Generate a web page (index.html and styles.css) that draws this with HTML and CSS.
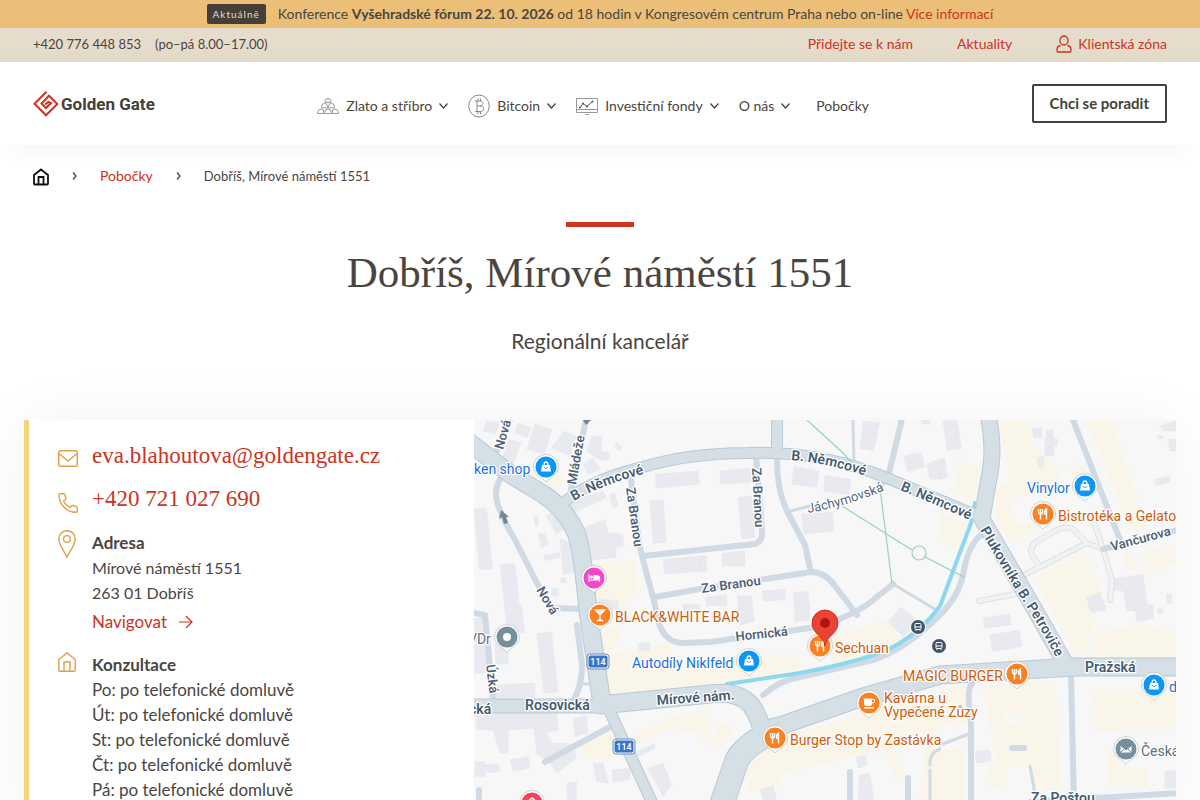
FILE: index.html
```html
<!DOCTYPE html>
<html lang="cs">
<head>
<meta charset="utf-8">
<meta name="viewport" content="width=device-width, initial-scale=1">
<title>Dobříš, Mírové náměstí 1551 | Golden Gate</title>
<link rel="stylesheet" href="styles.css">
</head>
<body>
<div class="notice">
  <span class="notice-tag">Aktuálně</span>
  <p class="notice-text">Konference <strong>Vyšehradské fórum 22. 10. 2026</strong> od 18 hodin v Kongresovém centrum Praha nebo on-line <a href="#">Více informací</a></p>
</div>
<div class="topbar">
  <p class="topbar-phone"><span>+420 776 448 853</span><span>(po–pá 8.00–17.00)</span></p>
  <nav class="topbar-links" aria-label="Rychlé odkazy">
    <a href="#">Přidejte se k nám</a>
    <a href="#">Aktuality</a>
    <a class="client" href="#"><svg width="16" height="18" viewBox="0 0 16 18" fill="none" stroke="currentColor" stroke-width="1.3"><rect x="4" y="1" width="8" height="9" rx="4"/><path d="M4.500 10.500C2 11 1 12.500 1 14.500V16Q1 17 2 17H14Q15 17 15 16V14.500C15 12.500 14 11 11.500 10.500"/></svg>Klientská zóna</a>
  </nav>
</div>
<header class="header">
  <a class="logo" href="#"><svg width="26" height="26" viewBox="0 0 26 26" fill="none" stroke="#cd3322" stroke-width="2"><path d="M13.500 .8L1.500 12.800L13 24.300L24.300 13L16 4.700L8.500 12.500L13 17L18 12L15.500 11L12 13.500"/></svg><span>Golden Gate</span></a>
  <nav class="nav" aria-label="Hlavní navigace">
    <a href="#"><svg width="22" height="18" viewBox="0 0 22 18" fill="none" stroke="#999" stroke-width="1"><path d="M8 5.500L8.500 2.500Q11 0 13.500 2.500L14 5.500ZM4.500 11L5 7.500Q7.500 5 10 7.500L10.500 11ZM11.500 11L12 7.500Q14.500 5 17 7.500L17.500 11ZM.5 16.500L1.500 13Q4 11 6.500 13L7 16.500ZM7.500 16.500L8.500 13Q11 11 13.500 13L14.500 16.500ZM15 16.500L15.500 13Q18 11 20.500 13L21.500 16.500Z"/></svg><span>Zlato a stříbro</span><svg class="chevron" width="9" height="6" viewBox="0 0 9 6"><path d="M.5 .5L4.500 5L8.500 .5"/></svg></a>
    <a href="#"><svg width="22" height="24" viewBox="0 0 22 24" fill="none" stroke="#8b8985" stroke-width="1"><ellipse cx="11" cy="12" rx="10.300" ry="11"/><path d="M7 7H12C16 7 16 12 12 12H9M12 12C17 12 17 17.500 12 17.500H7M9 7V17.500M10 4.500V7M12.500 4.500V7M10 17.500V20M12.500 17.500V20"/></svg><span>Bitcoin</span><svg class="chevron" width="9" height="6" viewBox="0 0 9 6"><path d="M.5 .5L4.500 5L8.500 .5"/></svg></a>
    <a href="#"><svg width="22" height="18" viewBox="0 0 22 18" fill="none" stroke="#999" stroke-width="1"><path d="M.5 1.500H21.500V15.500H.5ZM.5 12.500H21.500M9 17.500H13"/><path stroke="#555" d="M4 10.500L7 6.500L11 9.500L16.500 4.500"/><g fill="#555" stroke="none"><circle cx="4" cy="10.500" r="1"/><circle cx="7" cy="6.500" r="1"/><circle cx="11" cy="9.500" r="1"/><circle cx="16.500" cy="4.500" r="1"/></g></svg><span>Investiční fondy</span><svg class="chevron" width="9" height="6" viewBox="0 0 9 6"><path d="M.5 .5L4.500 5L8.500 .5"/></svg></a>
    <a href="#"><span>O nás</span><svg class="chevron" width="9" height="6" viewBox="0 0 9 6"><path d="M.5 .5L4.500 5L8.500 .5"/></svg></a>
    <a class="nav-last" href="#">Pobočky</a>
  </nav>
  <button class="cta" type="button">Chci se poradit</button>
</header>
<main>
  <nav class="crumbs" aria-label="Drobečková navigace">
    <a class="crumb-home" href="#" aria-label="Domů"><svg width="16" height="20" viewBox="0 0 16 20" fill="none" stroke="#111" stroke-width="1.800"><path d="M1 9L8 3.500L15 9V17.500Q15 18.500 14 18.500H2Q1 18.500 1 17.500ZM5.500 18.500V11H10.500V18.500"/></svg></a>
    <svg class="crumb-sep" width="5" height="8" viewBox="0 0 5 8"><path d="M1 .5L4 4L1 7.500"/></svg>
    <a href="#">Pobočky</a>
    <svg class="crumb-sep" width="5" height="8" viewBox="0 0 5 8"><path d="M1 .5L4 4L1 7.500"/></svg>
    <span>Dobříš, Mírové náměstí 1551</span>
  </nav>
  <div class="hero">
    <h1>Dobříš, Mírové náměstí 1551</h1>
    <p>Regionální kancelář</p>
  </div>
  <section class="card">
    <div class="contact">
      <a class="row row-big" href="#"><svg class="ico" width="20" height="17" viewBox="0 0 20 17"><rect x=".7" y=".7" width="18.600" height="15.600" rx="1.500"/><path d="M1 3.500L10 11L19 3.500"/></svg><span>eva.blahoutova@goldengate.cz</span></a>
      <a class="row row-big" href="#"><svg class="ico" width="20" height="20" viewBox="0 0 20 20"><path d="M1 1.500Q1 .7 2 .7H5.500Q6.700 .7 7 2L7.800 5Q8 6 7 6.800L5.500 7.800Q7.500 12.500 12.500 14.500L13.500 13Q14 12.200 15 12.500L18 13.300Q19.300 13.700 19.300 15V18Q19.300 19.300 18 19.300C8.500 19.300 .7 11 1 1.500Z"/></svg><span>+420 721 027 690</span></a>
      <div class="row address"><svg class="ico" width="18" height="28" viewBox="0 0 18 28"><path d="M9 27C6 21 .8 15 .8 9C.8 4 4.500 .8 9 .8S17.200 4 17.200 9C17.200 15 12 21 9 27Z"/><circle cx="9" cy="9" r="3.400"/></svg>
        <div><h2>Adresa</h2><p>Mírové náměstí 1551<br>263 01 Dobříš</p><a class="navigate" href="#">Navigovat<svg width="14" height="14" viewBox="0 0 14 14" fill="none" stroke="currentColor" stroke-width="1.200"><path d="M0 7H13M7 1L13 7L7 13"/></svg></a></div></div>
      <div class="row hours"><svg class="ico" width="18" height="20" viewBox="0 0 18 20"><path d="M.8 7.500L9 .9L17.200 7.500V18Q17.200 19.300 16 19.300H2Q.8 19.300 .8 18ZM6 19V10H12V19"/></svg>
        <div><h2>Konzultace</h2><p>Po: po telefonické domluvě<br>Út: po telefonické domluvě<br>St: po telefonické domluvě<br>Čt: po telefonické domluvě<br>Pá: po telefonické domluvě</p></div></div>
    </div>
    <svg class="map" viewBox="474 420 702 420" role="img" aria-label="Mapa okolí pobočky">
      <defs>
        <g id="m-shop"><path class="pin" d="M0 15C-3 11-12.500 8-12.500 0A12.500 12.500 0 0 1 12.500 0C12.500 8 3 11 0 15Z"/><circle r="10.500" fill="#0b96f8"/><path d="M-4-2H4L5 4.500H-5Z" fill="#fff"/><path d="M-2-2C-2-6 2-6 2-2" fill="none" stroke="#fff" stroke-width="1.300"/><path d="M-1.800 0C-1 2 1 2 1.800 0" fill="none" stroke="#0b96f8"/></g>
        <g id="m-food"><path class="pin" d="M0 15C-3 11-12.500 8-12.500 0A12.500 12.500 0 0 1 12.500 0C12.500 8 3 11 0 15Z"/><circle r="10.500" fill="#fb8122"/><path d="M-4.500-5V-2Q-4.500 0-2.500 0T-.5-2V-5M-2.500-5V5.500M3.500 5.500V-5Q1.500-4 1.500 0H3.500" fill="none" stroke="#fff" stroke-width="1.400"/></g>
        <g id="m-grey"><path class="pin" d="M0 15C-3 11-12.500 8-12.500 0A12.500 12.500 0 0 1 12.500 0C12.500 8 3 11 0 15Z"/><circle r="10.500" fill="#758f9b"/></g>
        <g id="m-bus"><circle r="8" fill="#f7f7f7"/><circle r="7" fill="#405469"/><rect x="-3" y="-3.500" width="6" height="6" rx="1" fill="none" stroke="#fff"/><path d="M-3 0H3M-2 4V3M2 4V3" stroke="#fff"/></g>
        <g id="m-114"><rect x="-10" y="-7" width="20" height="13" rx="2.500" fill="#3d75c6" stroke="#fff"/><rect x="-11" y="-8" width="22" height="15" rx="3" fill="none" stroke="#6e8ec0"/></g>
      </defs>
      <rect x="474" y="420" width="702" height="420" fill="#f7f7f7"/>
      <g class="land">
        <path d="M593 564L634 560L638 594L612 612L595 606ZM533 475L550 470L564 480L556 490Z"/>
        <path transform="translate(940 416) scale(.333)" d="M175 12H268L275 80L340 145L365 190L310 230L240 240L210 260L230 325L310 320L215 390L165 300L170 215L215 200ZM440 12H515L620 330L585 350L540 270L500 160ZM60 140L125 150L95 260L45 220ZM0 290L80 320L55 405L0 370ZM385 155L430 140L445 170L415 190ZM290 480L435 405L500 560L480 585H335ZM540 375L600 460L560 465ZM610 410L700 385L710 440L620 475Z"/>
        <path transform="translate(470 605) scale(.333)" d="M380 90L450 60V110L410 150L600 110L620 200L720 190V245L420 275ZM325 420L430 370L470 400L590 340L720 310V390L690 420L680 380L590 375L410 465H350Z"/>
        <path transform="translate(700 605) scale(.333)" d="M0 170L300 145V205L0 240ZM380 100L440 80L570 40L600 110L480 165L400 180ZM135 460L210 405L480 330L720 270V370L580 420L625 520L590 535L555 435L250 505L230 545L150 560ZM45 380L70 350L105 375L70 415L25 430ZM95 560H130L125 585H90ZM680 380H720V585H660Z"/>
        <path transform="translate(940 605) scale(.333)" d="M330 0H440L465 50L440 135L405 155ZM465 85L610 55L720 90V160H465ZM130 245L345 225L365 560L290 555L270 480L200 490V540L155 550L140 475H170ZM460 255H720V370L465 380ZM505 440H540V490H625V545H505ZM0 250L85 245V365L0 360ZM0 440L70 430V585H0Z"/>
      </g>
      <g class="houses">
        <path transform="translate(470 416) scale(.333)" d="M50 15L90 20L75 55L40 45ZM115 70L155 80L125 155L95 130ZM145 20L185 35L170 65L135 50ZM195 25L245 40L225 115L170 100ZM280 45L320 60L300 120L245 95ZM365 60L395 60V105L420 110L415 135L385 130L350 105ZM340 145L370 125L390 160L355 175ZM440 80L455 90L450 103L435 97ZM555 175L685 165L690 205L560 217ZM300 255L400 225L410 245L305 293ZM418 235L435 230L445 270L428 275ZM540 255L580 252L590 380L550 383ZM340 335L405 312L415 350L458 355L463 390L438 393V425L350 435ZM228 300L258 285L285 335L260 355ZM192 300L205 303V333L195 328ZM203 350L225 355L235 385L215 395ZM270 370L312 380V470L280 475ZM12 280L50 278L68 460H28ZM90 445L135 442L150 585H105ZM220 420L270 410V425L225 435ZM580 430L705 420L712 465L585 475ZM248 515L265 518L268 540H245ZM272 488L288 486V500H272ZM640 565H690V585H640ZM385 550L445 555V580H380Z"/>
        <path transform="translate(700 416) scale(.333)" d="M490 15L540 20L522 105L480 97ZM612 120L665 110L675 155L622 167ZM680 145L720 130V190H690ZM282 150L358 165L350 215L275 205ZM375 178L455 190L447 237L372 225ZM305 295L398 288L402 345L312 355ZM60 165L155 155V200L60 205ZM115 245L155 240L165 365L125 368ZM67 412L135 405V450H67ZM0 420H20V465H0ZM15 545L80 535V570H20ZM112 540H155L160 585H115ZM187 525L255 520V552L190 557ZM280 530L325 527L330 585H285ZM665 12H690V23H665Z"/>
        <path transform="translate(940 416) scale(.333)" d="M8 15L50 12L65 97L22 103ZM278 37H305V65H280ZM320 42H340V65L352 68V90H342V120H315V65H320ZM292 125L310 123V155H294ZM0 130L15 128L22 185L0 190ZM510 490L610 475L625 585H560L550 525H510ZM440 545L480 530L500 585H450ZM660 30L710 12V45H670ZM655 58H670V68H655ZM685 70H710V105H690ZM645 190L690 180L692 198L648 208ZM680 535L695 533V563H683Z"/>
        <path transform="translate(470 605) scale(.333)" d="M12 40H55V205H12ZM105 0H155L165 85L110 75ZM75 110L115 125V178H78ZM200 85L245 80L265 262L222 265ZM70 240L195 235V280H70ZM18 320H260L265 375L230 385L245 415H285L310 420L320 460L260 505L240 475L200 445L192 370L115 375V445H90L70 375H20ZM310 340L350 332L355 385L315 395ZM120 465L175 455L180 490L130 500ZM45 480L85 475L90 500L50 505ZM15 470H45V515H12ZM370 475H400L415 535L380 530ZM425 495L480 490V525L430 533ZM500 440L555 415V430L500 460ZM535 490L580 475L605 540L580 575ZM505 115L540 112L542 138L508 137ZM290 535L320 530V585H292Z"/>
        <path transform="translate(700 605) scale(.333)" d="M565 50L605 5L655 50L610 95ZM470 455L498 450L503 480L475 490ZM478 510L510 505L522 585H475ZM180 555L220 545L230 585H190ZM115 0H155L165 50L120 60ZM285 0H330V45L285 50Z"/>
        <path transform="translate(940 605) scale(.333)" d="M130 38L210 27L213 60L135 70ZM150 90L240 75L245 125L157 140ZM105 440L150 435L155 468L110 475ZM585 0H640V40L590 50ZM652 12L667 8L670 25L655 28ZM450 0H495V10L460 25ZM675 500L720 495V550H675Z"/>
        <path class="yard" d="M1004 714L1024 712V722L1004 724Z"/>
      </g>
      <g class="lanes-edge"><path d="M1022 576L1087 543L1073 529Q1067 525 1055 531L1036 542Q1028 548 1033 557L1038 564M1087 543L1103 549L1094 523M1103 549L1112 580L1110 600M1015 594L979 601"/></g>
      <g class="lanes"><path d="M1022 576L1087 543L1073 529Q1067 525 1055 531L1036 542Q1028 548 1033 557L1038 564M1087 543L1103 549L1094 523M1103 549L1112 580L1110 600M1015 594L979 601"/></g>
      <g class="minor">
        <path d="M500 479Q493 492 498 505Q504 522 513 536L537 583L552 608L585 609M495 455L512 415M569 499L587 415M630 472L640 548L655 605Q659 643 683 643L710 642L810 628Q840 622 867 605L893 584M643 556L755 544Q763 541 762 530L756 455M777 453Q776 490 788 513L805 545L811 572M655 597L700 589L811 572Q825 572 835 586L857 615M903 415L888 477M577 625L582 665Q582 685 575 697M545 762L610 727M474 613L485 615L493 700M1073 420L1122 545M1103 549L1178 530M983 533Q968 545 964 570T940 615Q905 650 873 660L800 677Q780 680 763 695M1071 675L1075 850M972 684Q966 690 971 722V850M1030 802L1180 793M850 772V850M908 778V850"/>
        <path class="thin" d="M853 420L854 463M787 512L810 506M873 490L888 481M893 584L938 611M581 684H593M940 745L969 734M1030 766L1036 800M940 749Q929 753 930 765M930 770V850"/>
        <path d="M1012 748H1024M479 790V850"/>
      </g>
      <g class="river"><path d="M975 503L971 523L940 606Q925 627 900 643T800 673L727 684"/></g>
      <g class="major-edge">
        <path stroke-width="19" d="M470 443L510 474L543 494Q567 510 577 535Q583 555 588 611L602 704M600 705L710 694Q738 690 751 705Q760 718 763 735M1180 667L1073 667L940 675L860 698L777 727"/>
        <path stroke-width="25" d="M775 730Q745 745 737 760L718 815"/><path stroke-width="17" d="M988 415Q996 450 988 483L982 519L1035 610L1065 663"/>
        <path stroke-width="15" d="M474 706H602"/><path stroke-width="12" d="M567 500Q595 478 643 467Q690 453 747 453Q820 450 887 478L978 516M777 415V453M610 712L665 830"/>
      </g>
      <g class="major">
        <path stroke-width="17" d="M470 443L510 474L543 494Q567 510 577 535Q583 555 588 611L602 704M600 705L710 694Q738 690 751 705Q760 718 763 735M1180 667L1073 667L940 675L860 698L777 727"/>
        <path stroke-width="23" d="M775 730Q745 745 737 760L718 815"/><path stroke-width="15" d="M988 415Q996 450 988 483L982 519L1035 610L1065 663"/>
        <path stroke-width="13" d="M474 706H602"/><path stroke-width="10" d="M567 500Q595 478 643 467Q690 453 747 453Q820 450 887 478L978 516M777 415V453M610 712L665 830"/>
      </g>
      <path class="trail" d="M807 420L843 453L852 463M842 506L912 550M925 557L964 577M880 488L892 583"/><circle class="trail" cx="919" cy="553" r="7"/>
      <path fill="#758596" d="M501 510L509 517L506 517L508 523L504 524L502 517L499 519ZM583 420H591L586 425Z"/>
      <path id="nem1" fill="none" d="M574 501Q605 483 655 471"/><path id="nem2" fill="none" d="M791 460Q830 463 878 480"/><path id="nem3" fill="none" d="M900 490Q935 504 980 525"/><path id="pluk" fill="none" d="M980 530Q1003 570 1025 604T1065 675"/><path id="jach" fill="none" d="M808 513Q845 507 890 488"/>
      <g class="road-label">
        <text><textPath href="#nem1">B. Němcové</textPath></text><text><textPath href="#nem2">B. Němcové</textPath></text><text><textPath href="#nem3">B. Němcové</textPath></text><text><textPath href="#pluk">Plukovníka B. Petroviče</textPath></text>
        <text x="525" y="710">Rosovická</text><text transform="translate(657 705) rotate(-4)">Mírové nám.</text><text x="1085" y="672">Pražská</text><text x="1031" y="803">Za Poštou</text><text x="469" y="714">cká</text>
      </g>
      <g class="street-label">
        <text transform="translate(503 450) rotate(-74)">Nová</text><text transform="translate(576 485) rotate(-80)">Mládeže</text><text transform="translate(626 488) rotate(82)">Za Branou</text><text transform="translate(752 468) rotate(87)">Za Branou</text><text transform="translate(702 593) rotate(-8)">Za Branou</text><text transform="translate(736 641) rotate(-6)">Hornická</text><text transform="translate(536 590) rotate(59)">Nová</text><text transform="translate(486 665) rotate(83)">Úzká</text><text transform="translate(1112 551) rotate(-15)">Vančurova</text>
        <text class="light"><textPath href="#jach">Jáchymovská</textPath></text>
      </g>
      <use href="#m-shop" x="546" y="467"/><use href="#m-shop" x="1085" y="486"/><use href="#m-shop" x="749" y="661"/><use href="#m-shop" x="1154" y="685"/>
      <use href="#m-food" x="1043" y="514"/><use href="#m-food" x="820" y="646"/><use href="#m-food" x="1017" y="674"/><use href="#m-food" x="775" y="738"/>
      <g transform="translate(594 578)"><path class="pin" d="M0 15C-3 11-12.500 8-12.500 0A12.500 12.500 0 0 1 12.500 0C12.500 8 3 11 0 15Z"/><circle r="10.500" fill="#f545c8"/><path d="M-5-4V4M-5 2H5.500V4M5.500 2V-1L3.500-2.500H0V2" fill="none" stroke="#fff" stroke-width="1.200"/><path d="M0 2V-2.500H3.500L5.500-1V2Z" fill="#fff"/><circle cx="-2.500" cy="-1" r="1.500" fill="#fff"/></g>
      <g transform="translate(600 615)"><path class="pin" d="M0 15C-3 11-12.500 8-12.500 0A12.500 12.500 0 0 1 12.500 0C12.500 8 3 11 0 15Z"/><circle r="10.500" fill="#fb8122"/><path d="M-4.500-5H4.500L0 0ZM0 0V5M-3 5.500H3M-3-3H3" fill="none" stroke="#fff" stroke-width="1.400"/></g>
      <g transform="translate(869 703)"><path class="pin" d="M0 15C-3 11-12.500 8-12.500 0A12.500 12.500 0 0 1 12.500 0C12.500 8 3 11 0 15Z"/><circle r="10.500" fill="#fb8122"/><path d="M-5-4.500H3V1Q3 3-1 3Q-5 3-5 1ZM-5 4H5V5.500H-5Z" fill="#fff"/><path d="M3-3.500H5.500V-1Q5 0 3 0" fill="none" stroke="#fff"/></g>
      <use href="#m-grey" x="507" y="637"/><circle cx="507" cy="637" r="4" fill="#fff"/>
      <use href="#m-grey" x="1126" y="749"/><path d="M1120 745H1132V753H1120ZM1120 745L1126 750L1132 745M1120 753L1124 749M1132 753L1128 749" fill="#fff" stroke="#758f9b" stroke-width="1"/>
      <g transform="translate(532 803)"><path class="pin" d="M0 15C-3 11-12.500 8-12.500 0A12.500 12.500 0 0 1 12.500 0C12.500 8 3 11 0 15Z"/><circle r="10.500" fill="#f5455c"/><path d="M-6 0L0-5L6 0M-4 0V5M4 0V5M0-1V4" fill="none" stroke="#fff" stroke-width="1.400"/></g>
      <use href="#m-bus" x="918" y="627"/><use href="#m-bus" x="939" y="646"/>
      <g transform="translate(825 646)"><path d="M0 0C-1-10-13-12-13-23A13 13 0 0 1 13-23C13-12 1-10 0 0Z" fill="#ea4335" stroke="#c5221f" stroke-width=".8"/><circle cy="-23" r="5" fill="#b31412"/></g>
      <use href="#m-114" x="598" y="662"/><use href="#m-114" x="624" y="747"/>
      <g class="shield"><text x="598" y="665">114</text><text x="624" y="750">114</text></g>
      <g class="poi"><text x="1058" y="521">Bistrotéka a Gelato</text><text x="615" y="622">BLACK&amp;WHITE BAR</text><text x="835" y="653">Sechuan</text><text x="903" y="681">MAGIC BURGER</text><text x="884" y="703">Kavárna u</text><text x="884" y="717">Vypečené Zůzy</text><text x="790" y="745">Burger Stop by Zastávka</text></g>
      <g class="poi blue"><text x="474" y="474">ken shop</text><text x="1027" y="493">Vinylor</text><text x="632" y="668">Autodíly Niklfeld</text><text x="1169" y="692">d</text></g>
      <g class="poi grey"><text x="468" y="644">VDr</text><text x="1141" y="756">Česká</text></g>
    </svg>
  </section>
</main>
</body>
</html>
```
FILE: styles.css
```css
* { box-sizing: border-box; }
body {
  margin: 0;
  background: #fff;
  color: #4b453f;
  font-family: Lato, "Open Sans", sans-serif;
  font-size: 14px;
  line-height: 20px;
}
p, h1, h2 { margin: 0; }
a { color: #cd3322; text-decoration: none; }
svg { flex: none; }

.notice {
  display: flex;
  align-items: center;
  justify-content: center;
  gap: 12px;
  min-height: 28px;
  padding-bottom: 1px;
  background: #ecbf78;
}
.notice-tag {
  padding: 0 6px;
  border-radius: 2px;
  background: #453f38;
  color: #e6dccb;
  font-size: 10px;
  letter-spacing: 1px;
}
.topbar {
  display: flex;
  align-items: center;
  justify-content: space-between;
  min-height: 34px;
  padding: 0 33px 2px;
  background: linear-gradient(#e6dccb 60%, #e2d8c6);
}
.topbar-phone { display: flex; gap: 14px; font-size: 13px; }
.topbar-links { display: flex; align-items: center; gap: 44px; }
.client { display: flex; align-items: center; gap: 6px; }

.header {
  display: flex;
  align-items: center;
  justify-content: space-between;
  min-height: 83px;
  padding: 0 33px;
  background: #fff;
  box-shadow: 0 20px 25px -15px rgba(0, 0, 0, .05);
}
.logo {
  display: flex;
  align-items: center;
  gap: 2px;
  color: #453f38;
  font: bold 17px/24px Roboto, sans-serif;
}
.nav { display: flex; align-items: center; gap: 20px; padding-top: 4px; }
.nav a { display: flex; align-items: center; gap: 7px; color: #4b453f; }
.nav .nav-last { margin-left: 6px; }
.chevron { fill: none; stroke: #453f38; stroke-width: 1.2; }
.cta {
  padding: 8px 16px 9px;
  border: 2px solid #453f38;
  border-radius: 2px;
  background: #fff;
  color: #453f38;
  font: bold 15px/18px Lato, sans-serif;
}

.crumbs {
  display: flex;
  align-items: center;
  gap: 23px;
  padding: 21px 33px 0;
}
.crumbs span { font-size: 13px; }
.crumb-home { display: flex; }
.crumb-sep { fill: none; stroke: #453f38; stroke-width: 1.2; }

.hero { padding: 36px 24px 64px; text-align: center; }
.hero::before {
  content: "";
  display: block;
  width: 68px;
  height: 5px;
  margin: 0 auto 20px;
  background: #cd3322;
}
.hero h1 { font: 43px/52px "Liberation Serif", serif; }
.hero p { margin-top: 27px; font-size: 21px; line-height: 30px; }

.card {
  display: grid;
  grid-template-columns: 445px 1fr;
  margin: 0 24px;
  border-left: 5px solid #f6d27c;
  background: #fff;
  box-shadow: 0 0 60px rgba(0, 0, 0, .05);
}
.contact { padding: 20px 29px 32px; font-size: 17px; line-height: 25px; }
.row { display: grid; grid-template-columns: 20px 1fr; gap: 14px; }
.ico { margin-top: 10px; fill: none; stroke: #dfa048; stroke-width: 1.4; }
.row-big { margin-bottom: 11px; font: 23px/32px "Liberation Serif", serif; }
.address .ico, .hours .ico { margin: 0; }
.address { margin-top: 15px; }
.address p { font-size: 16px; }
.contact h2 { font-size: 17px; line-height: 25px; }
.navigate { display: inline-flex; align-items: center; gap: 12px; margin-top: 4px; }
.hours { margin-top: 18px; }

.map { display: block; width: 100%; font-family: Roboto, sans-serif; font-size: 14px; }
.map text { paint-order: stroke; stroke: #fff; stroke-width: 2.5px; stroke-linejoin: round; }
.land { fill: #faf5e9; }
.houses { fill: #e8eaf0; stroke: #dde0e8; stroke-width: .7; }
.yard { fill: #f7f7f7; stroke: none; }
.lanes, .lanes-edge, .minor, .major, .major-edge, .river, .trail { fill: none; stroke-linecap: round; stroke-linejoin: round; }
.lanes { stroke: #f1f2f4; stroke-width: 4; }
.lanes-edge { stroke: #dfe1e5; stroke-width: 6; }
.minor { stroke: #cfdae4; stroke-width: 6; }
.minor .thin { stroke-width: 3; }
.river { stroke: #8cd8ee; stroke-width: 4; }
.major { stroke: #d5dfe6; }
.major-edge { stroke: #bac9d4; }
.trail { stroke: #96d3ba; stroke-width: 1.2; }
.road-label { fill: #455b70; font-weight: 600; }
.street-label { fill: #4f6478; font-size: 13px; font-weight: 600; }
.street-label .light { font-weight: 400; }
.poi { fill: #cf5c0b; }
.blue { fill: #1a6fe0; }
.grey { fill: #5d717e; }
.pin { fill: #fff; stroke: #bcbcbc; stroke-width: .7; }
.map .shield text { fill: #fff; stroke: none; font-size: 9px; font-weight: 500; text-anchor: middle; }
```
